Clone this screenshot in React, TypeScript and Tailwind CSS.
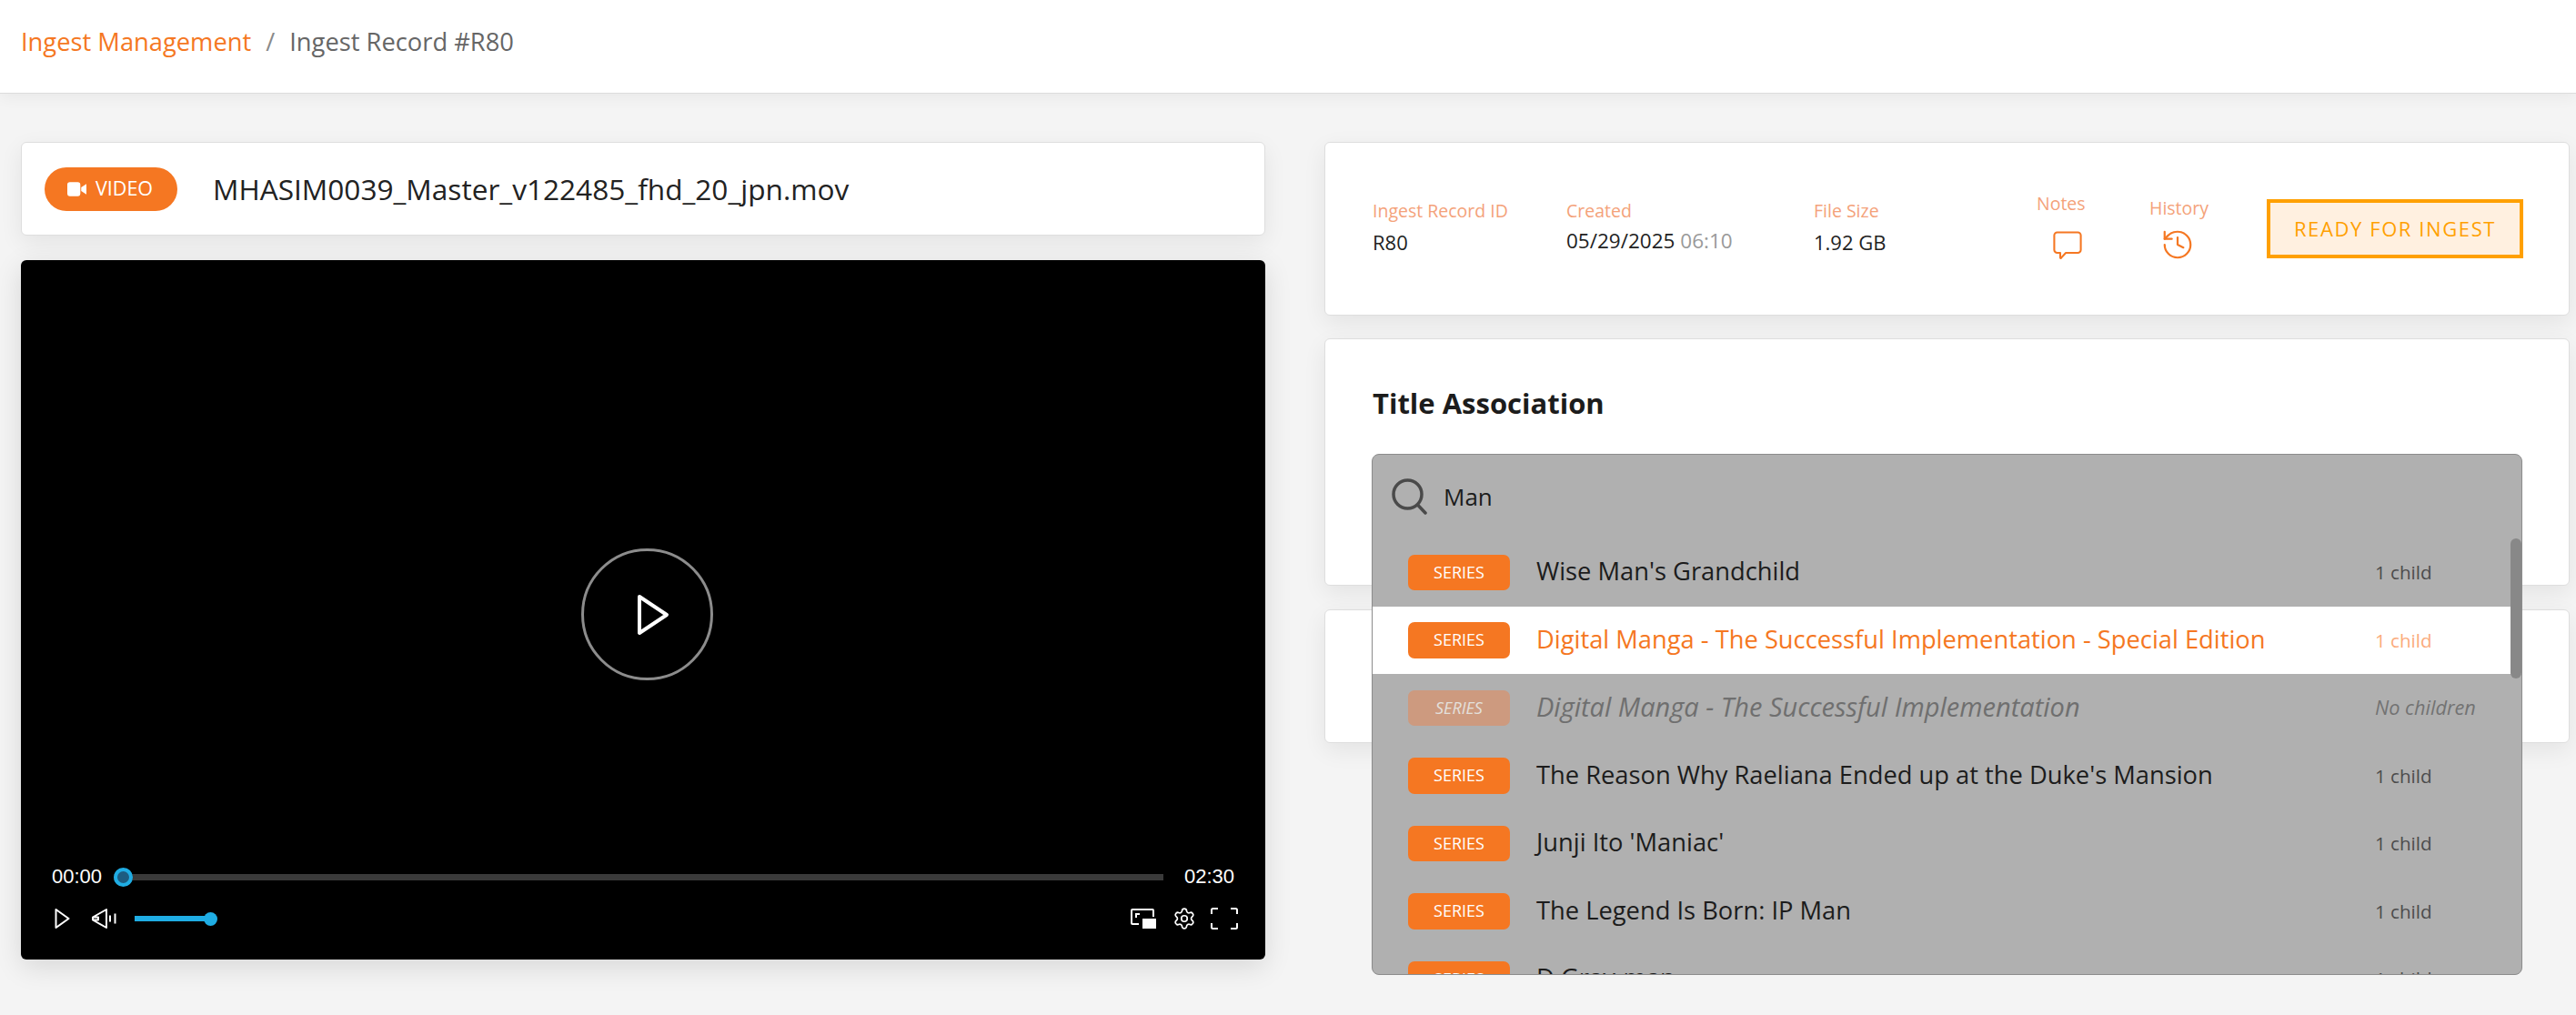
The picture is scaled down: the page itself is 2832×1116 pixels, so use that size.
import React from "react";
import { History, Settings } from "lucide-react";

const rows = [
  { t: "Wise Man's Grandchild", c: "1 child" },
  { t: "Digital Manga - The Successful Implementation - Special Edition", c: "1 child", active: true },
  { t: "Digital Manga - The Successful Implementation", c: "No children", disabled: true },
  { t: "The Reason Why Raeliana Ended up at the Duke's Mansion", c: "1 child" },
  { t: "Junji Ito 'Maniac'", c: "1 child" },
  { t: "The Legend Is Born: IP Man", c: "1 child" },
  { t: "D.Gray-man", c: "1 child" },
];

function Row({ t, c, active, disabled }: { t: string; c: string; active?: boolean; disabled?: boolean }) {
  return (
    <div className={`flex h-[74.5px] shrink-0 items-center pl-[39px] ${active ? "bg-white" : ""} ${disabled ? "italic" : ""}`}>
      <div className={`flex h-[39.5px] w-[112px] shrink-0 items-center justify-center rounded-[7px] text-[18px] ${disabled ? "bg-[#cd9a7f] text-[#e4e0dc]" : "bg-[#f57722] text-white"}`}>
        SERIES
      </div>
      <div className={`ml-[29px] w-[922px] shrink-0 -translate-y-[1.5px] leading-[36px] ${active ? "text-[27.3px] text-[#f57722]" : disabled ? "text-[29px] text-[#6f6f6f]" : "text-[27.3px] text-[#1c1c1c]"}`}>
        {t}
      </div>
      <div className={`leading-[28px] ${disabled ? "text-[21.7px] text-[#737373]" : active ? "text-[20.6px] text-[#fbab7c]" : "text-[20.6px] text-[#4c4c4c]"}`}>{c}</div>
    </div>
  );
}

function Stat({ label, className, children }: { label: string; className: string; children: React.ReactNode }) {
  return (
    <div className={className}>
      <div className="text-[19.5px] leading-[25px] text-[#f4a27a]">{label}</div>
      <div className="mt-[8px] text-[22px] leading-[28px] text-[#222]">{children}</div>
    </div>
  );
}

const cardCls = "rounded-[6px] border border-[#dedede] bg-white shadow-[0_8px_26px_rgba(0,0,0,0.07)]";

export default function App() {
  return (
    <div className="h-[1116px] w-[2832px] overflow-hidden bg-[#f4f4f4] font-['Open_Sans',sans-serif]">
      <header className="flex h-[103px] items-center border-b border-[#dcdcdc] bg-white pb-[10px] pl-[23px] text-[27.3px] shadow-[0_4px_16px_rgba(0,0,0,0.05)]">
        <span className="text-[#f57722]">Ingest Management</span>
        <span className="mx-[16px] text-[#8a8a8a]">/</span>
        <span className="text-[#666]">Ingest Record #R80</span>
      </header>

      <main className="flex gap-[65px] pl-[23px] pt-[53px]">
        <section className="w-[1368px]">
          <div className={`${cardCls} flex h-[103px] items-center pl-[25px]`}>
            <div className="flex h-[48px] w-[146px] items-center justify-center gap-[10px] rounded-full bg-[#f57722] pr-[2px] text-[21.5px] text-white">
              <svg width="21" height="16" viewBox="0 0 22 16" fill="white">
                <rect x="0" y="0" width="15" height="16" rx="3" />
                <path d="M16 6l6-4v12l-6-4z" />
              </svg>
              VIDEO
            </div>
            <div className="ml-[39px] text-[31.6px] leading-[44px] text-[#222]">MHASIM0039_Master_v122485_fhd_20_jpn.mov</div>
          </div>

          <div className="relative mt-[27px] flex h-[769px] flex-col justify-end rounded-[6px] bg-black font-['Liberation_Sans',sans-serif] text-white shadow-[0_8px_30px_rgba(0,0,0,0.12)]">
            <div className="absolute left-[616px] top-[317px] flex h-[145px] w-[145px] items-center justify-center rounded-full border-[3px] border-[#8c8c8c]">
              <svg width="36" height="46" viewBox="0 0 36 46" fill="none" className="ml-[12px]">
                <path d="M3 3L33 23L3 43Z" stroke="white" strokeWidth="4" strokeLinejoin="round" />
              </svg>
            </div>
            <div className="flex h-[24px] items-center pl-[34px] pr-[34px] text-[22px]">
              <span className="w-[68px] shrink-0 leading-[24px]">00:00</span>
              <div className="relative h-[7px] w-[1154px] shrink-0 bg-[#3a3a3a]">
                <div className="absolute left-0 top-[-7px] h-[21px] w-[21px] rounded-full border-[4px] border-[#1fade4] bg-[#1d5c80]" />
              </div>
              <span className="ml-[23px] leading-[24px]">02:30</span>
            </div>
            <div className="mb-[33px] mt-[22px] flex h-[24px] items-center pl-[37px] pr-[30px]">
              <svg width="17" height="24" viewBox="0 0 17 24" fill="none">
                <path d="M1.5 2L15.5 12L1.5 22Z" stroke="white" strokeWidth="2" strokeLinejoin="round" />
              </svg>
              <svg width="27" height="24" viewBox="0 0 27 24" fill="none" className="ml-[24px]">
                <path d="M1 10.5L16 2V22L1 13.5Z M1 10.5H7V13.5H1" stroke="white" strokeWidth="2" strokeLinejoin="round" />
                <path d="M20 8.5V15.5M25.5 6.5V17.5" stroke="white" strokeWidth="2" />
              </svg>
              <div className="relative ml-[20px] h-[6px] w-[84px] bg-[#1fade4]">
                <div className="absolute right-[-7px] top-[-4.5px] h-[15px] w-[15px] rounded-full bg-[#1fade4]" />
              </div>
              <div className="ml-auto flex items-center">
                <svg width="28" height="22" viewBox="0 0 28 22" fill="none">
                  <path d="M9 17H2a1 1 0 0 1-1-1V2a1 1 0 0 1 1-1h22a1 1 0 0 1 1 1v7" stroke="white" strokeWidth="2" />
                  <rect x="13" y="11" width="15" height="11" fill="white" />
                  <path d="M6 10V6h4" stroke="white" strokeWidth="2" />
                </svg>
                <Settings size={26} strokeWidth={1.6} className="ml-[18px]" />
                <svg width="30" height="24" viewBox="0 0 30 24" fill="none" className="ml-[16px]">
                  <path d="M1 7V2.500A1.500 1.500 0 0 1 2.500 1H8M22 1h5.500A1.500 1.500 0 0 1 29 2.500V7M29 17v4.500a1.500 1.500 0 0 1-1.500 1.500H22M8 23H2.500A1.500 1.500 0 0 1 1 21.500V17" stroke="white" strokeWidth="2" />
                </svg>
              </div>
            </div>
          </div>
        </section>

        <section className="w-[1369px]">
          <div className={`${cardCls} relative flex h-[191px] items-start pl-[52px] pt-[62px]`}>
            <Stat label="Ingest Record ID" className="w-[213px]">R80</Stat>
            <Stat label="Created" className="w-[272px]">
              <span className="-mt-[1px] block text-[22.5px]">05/29/2025 <span className="text-[#999]">06:10</span></span>
            </Stat>
            <Stat label="File Size" className="w-[245px]">1.92 GB</Stat>
            <div className="-mt-[9px] flex w-[124px] flex-col items-start">
              <div className="text-[19.5px] leading-[27px] text-[#f4a27a]">Notes</div>
              <svg width="32" height="32" viewBox="0 0 34 34" fill="none" className="ml-[18px] mt-[17px]">
                <path d="M5 1.500H29A3.500 3.500 0 0 1 32.500 5V22A3.500 3.500 0 0 1 29 25.500H15L9.500 31.500C9 32 8.500 31.800 8.500 31V25.500H5A3.500 3.500 0 0 1 1.500 22V5A3.500 3.500 0 0 1 5 1.500Z" stroke="#f57722" strokeWidth="2.200" strokeLinejoin="round" />
              </svg>
            </div>
            <div className="-mt-[4px] flex w-[129px] flex-col items-start">
              <div className="text-[19.5px] leading-[27px] text-[#f4a27a]">History</div>
              <History size={38} strokeWidth={1.4} color="#f57722" className="ml-[12px] mt-[8px]" />
            </div>
            <div className="flex h-[65px] w-[282px] items-center justify-center border-[4px] border-[#ffa000] bg-[#fff0e0] text-[22px] tracking-[1.6px] text-[#ffa000]">
              READY FOR INGEST
            </div>
          </div>

          <div className={`${cardCls} relative z-10 mt-[25px] h-[272px] pl-[52px] pt-[49px]`}>
            <h2 className="text-[31px] font-bold leading-[42px] text-[#1c1c1c]">Title Association</h2>
            <div className="absolute left-[51px] top-[126px] flex h-[573px] w-[1265px] flex-col overflow-hidden rounded-[8px] border border-[#8c8c8c] bg-[#b0b0b0]">
              <div className="flex h-[92px] shrink-0 items-center pl-[21px]">
                <svg width="40" height="40" viewBox="0 0 40 40" fill="none">
                  <circle cx="17.500" cy="17.500" r="15.500" stroke="#4a4a4a" strokeWidth="3.500" />
                  <path d="M28.500 29L37 38" stroke="#4a4a4a" strokeWidth="3.500" strokeLinecap="round" />
                </svg>
                <span className="ml-[17px] text-[26px] text-[#1c1c1c]">Man</span>
              </div>
              {rows.map((r) => <Row key={r.t} {...r} />)}
              <div className="absolute right-0 top-[92px] h-[154px] w-[12px] rounded-full bg-[#888]" />
            </div>
          </div>

          <div className={`${cardCls} mt-[26px] h-[147px]`} />
        </section>
      </main>
    </div>
  );
}
